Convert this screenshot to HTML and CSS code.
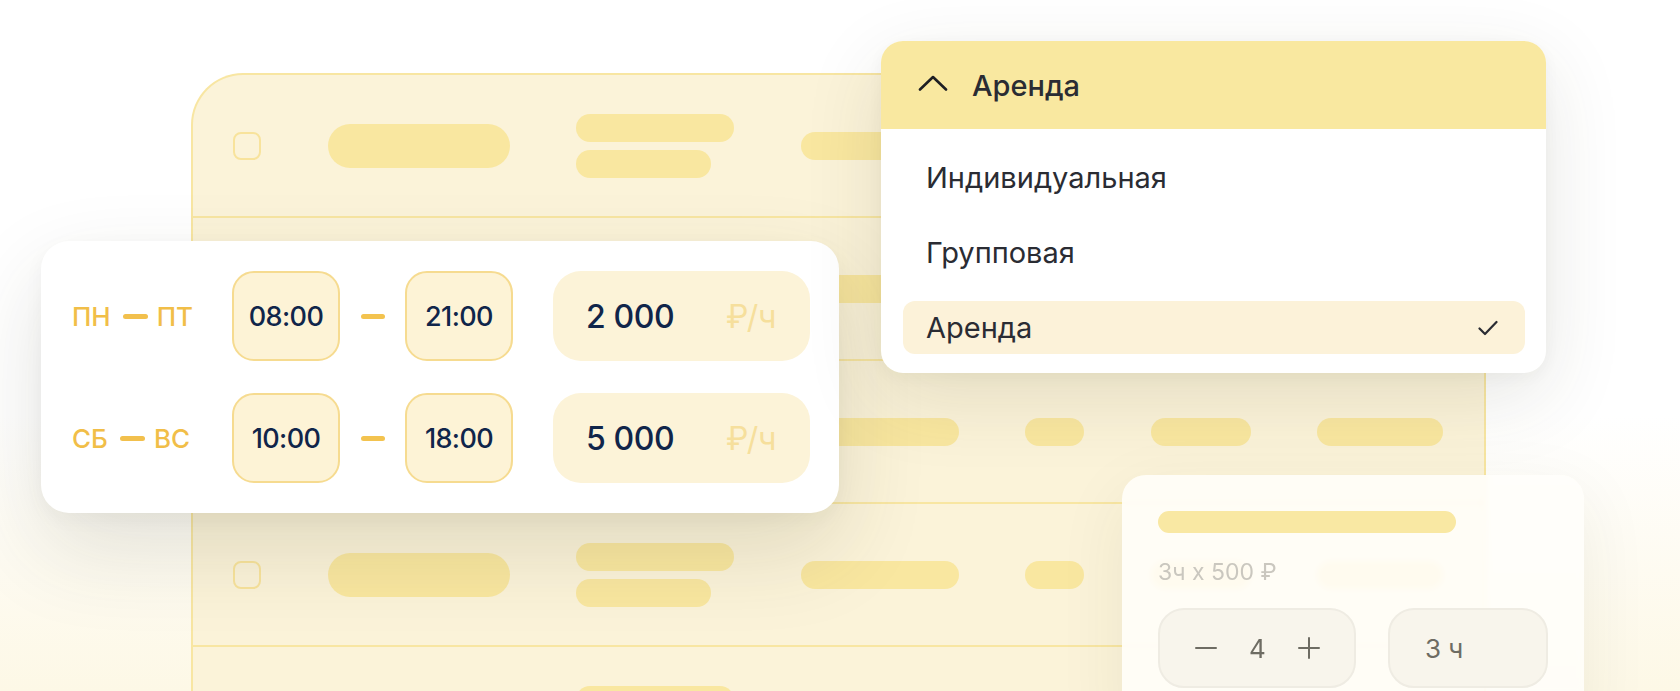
FILE: index.html
```html
<!DOCTYPE html>
<html lang="ru">
<head>
<meta charset="utf-8">
<title>Расписание и аренда</title>
<link rel="stylesheet" href="styles.css">
</head>
<body>
<div class="scene">

  <!-- skeleton table in the background -->
  <div class="table">
    <div class="row">
      <span class="check"></span>
      <span class="pill"></span>
      <span class="stack"><i class="bar bar-a"></i><i class="bar bar-b"></i></span>
      <span class="bar c3"></span>
      <span class="bar c4"></span>
      <span class="bar c5"></span>
      <span class="bar c6"></span>
    </div>
    <div class="row">
      <span class="check"></span>
      <span class="pill"></span>
      <span class="stack"><i class="bar bar-a"></i><i class="bar bar-b"></i></span>
      <span class="bar c3"></span>
      <span class="bar c4"></span>
      <span class="bar c5"></span>
      <span class="bar c6"></span>
    </div>
    <div class="row">
      <span class="check"></span>
      <span class="pill"></span>
      <span class="stack"><i class="bar bar-a"></i><i class="bar bar-b"></i></span>
      <span class="bar c3"></span>
      <span class="bar c4"></span>
      <span class="bar c5"></span>
      <span class="bar c6"></span>
    </div>
    <div class="row">
      <span class="check"></span>
      <span class="pill"></span>
      <span class="stack"><i class="bar bar-a"></i><i class="bar bar-b"></i></span>
      <span class="bar c3"></span>
      <span class="bar c4"></span>
      <span class="bar c5"></span>
      <span class="bar c6"></span>
    </div>
    <div class="row">
      <span class="check"></span>
      <span class="pill"></span>
      <span class="stack"><i class="bar bar-a"></i><i class="bar bar-b"></i></span>
      <span class="bar c3"></span>
      <span class="bar c4"></span>
      <span class="bar c5"></span>
      <span class="bar c6"></span>
    </div>
  </div>

  <!-- working hours and prices -->
  <div class="schedule">
    <div class="sched-row">
      <div class="days">ПН<span class="dash"></span>ПТ</div>
      <div class="time">08:00</div>
      <span class="sep"></span>
      <div class="time">21:00</div>
      <div class="price"><span class="amount">2 000</span><span class="unit">₽/ч</span></div>
    </div>
    <div class="sched-row">
      <div class="days">СБ<span class="dash"></span>ВС</div>
      <div class="time">10:00</div>
      <span class="sep"></span>
      <div class="time">18:00</div>
      <div class="price"><span class="amount">5 000</span><span class="unit">₽/ч</span></div>
    </div>
  </div>

  <!-- booking type select -->
  <div class="dropdown">
    <div class="dd-head">
      <svg class="chev" width="30" height="16" viewBox="0 0 30 16" aria-hidden="true">
        <path d="M2 14.5 L15 2 L28 14.5" fill="none" stroke="#1e1f23" stroke-width="2.6" stroke-linecap="round" stroke-linejoin="round"/>
      </svg>
      <span>Аренда</span>
    </div>
    <ul class="dd-list">
      <li class="dd-item">Индивидуальная</li>
      <li class="dd-item">Групповая</li>
      <li class="dd-item selected">Аренда
        <svg width="20" height="16" viewBox="0 0 20 16" aria-hidden="true">
          <path d="M1.5 8.5 L7 14 L18.5 2" fill="none" stroke="#2a2c33" stroke-width="2.2" stroke-linecap="round" stroke-linejoin="round"/>
        </svg>
      </li>
    </ul>
  </div>

  <!-- booking summary -->
  <div class="booking">
    <div class="b-bar"></div>
    <div class="b-calc">3ч x 500 ₽</div>
    <div class="b-controls">
      <div class="stepper">
        <svg width="22" height="22" viewBox="0 0 22 22" aria-label="меньше">
          <path d="M1 11 H21" stroke="#6e6c63" stroke-width="2" stroke-linecap="round"/>
        </svg>
        <span class="qty">4</span>
        <svg width="22" height="22" viewBox="0 0 22 22" aria-label="больше">
          <path d="M1 11 H21 M11 1 V21" stroke="#6e6c63" stroke-width="2" stroke-linecap="round"/>
        </svg>
      </div>
      <div class="hours">3 ч</div>
    </div>
  </div>

</div>
</body>
</html>
```

FILE: styles.css
```css
* {
  box-sizing: border-box;
}

html, body {
  margin: 0;
  padding: 0;
}

body {
  width: 1680px;
  height: 691px;
  overflow: hidden;
  font-family: Inter, "Noto Sans", "DejaVu Sans", sans-serif;
  background: linear-gradient(to bottom, #ffffff 0%, #ffffff 60%, #fdf8e6 100%);
}

.scene {
  position: relative;
  width: 1680px;
  height: 691px;
  overflow: hidden;
  padding-top: 73px;
  padding-left: 191px;
}

/* ---------- background table ---------- */

.table {
  width: 1295px;
  background: #fbf3d9;
  border: 2px solid #f8e6a2;
  border-bottom: none;
  border-radius: 52px 24px 0 0;
}

.row {
  height: 143px;
  display: flex;
  align-items: center;
  gap: 66.5px;
  padding-left: 40px;
  border-bottom: 2px solid #f8e6a2;
}

.check {
  width: 28px;
  height: 28px;
  flex: none;
  border: 2px solid #f8e39c;
  border-radius: 8px;
}

.pill {
  width: 182px;
  height: 44px;
  flex: none;
  border-radius: 22px;
  background: #f9e7a0;
}

.stack {
  display: flex;
  flex-direction: column;
  gap: 8px;
  width: 158px;
  flex: none;
}

.bar {
  display: block;
  height: 28px;
  flex: none;
  border-radius: 14px;
  background: #f9e7a0;
}

.bar-a { width: 158px; }
.bar-b { width: 135px; }
.c3 { width: 158px; }
.c4 { width: 59px; }
.c5 { width: 100px; }
.c6 { width: 126px; }

/* ---------- schedule card ---------- */

.schedule {
  position: absolute;
  left: 41px;
  top: 241px;
  width: 798px;
  padding: 30px 29px 30px 31px;
  display: flex;
  flex-direction: column;
  gap: 32px;
  background: #ffffff;
  border-radius: 28px;
  box-shadow: 0 36px 90px rgba(60, 55, 35, 0.14), 0 6px 20px rgba(60, 55, 35, 0.04);
}

.sched-row {
  display: flex;
  align-items: center;
  height: 90px;
}

.days {
  width: 160px;
  flex: none;
  display: flex;
  align-items: center;
  font-size: 26px;
  font-weight: 500;
  color: #f1be48;
}

.dash {
  display: inline-block;
  width: 25px;
  height: 5px;
  margin: 0 9px 0 12px;
  border-radius: 3px;
  background: #f2c04d;
}

.time {
  width: 108px;
  height: 90px;
  flex: none;
  display: flex;
  align-items: center;
  justify-content: center;
  border: 2px solid #f6db90;
  border-radius: 22px;
  background: #fdf3d6;
  font-size: 27px;
  font-weight: 500;
  color: #10254a;
  letter-spacing: -0.6px;
}

.sep {
  width: 24px;
  height: 5px;
  flex: none;
  margin: 0 20px 0 21px;
  border-radius: 3px;
  background: #f3c34f;
}

.price {
  margin-left: 40px;
  width: 257px;
  height: 90px;
  flex: none;
  display: flex;
  align-items: center;
  justify-content: space-between;
  padding: 0 34px 0 33px;
  border-radius: 28px;
  background: #fcf3d8;
  font-size: 32px;
  font-weight: 500;
  letter-spacing: -0.4px;
}

.amount {
  color: #10254a;
}

.unit {
  color: #f6df9c;
  font-weight: 400;
}

/* ---------- dropdown ---------- */

.dropdown {
  position: absolute;
  left: 881px;
  top: 41px;
  width: 665px;
  background: #ffffff;
  border-radius: 22px;
  overflow: hidden;
  box-shadow: 0 24px 80px rgba(60, 55, 35, 0.12), 0 4px 16px rgba(60, 55, 35, 0.04);
  color: #2a2c33;
}

.dd-head {
  height: 88px;
  display: flex;
  align-items: center;
  gap: 24px;
  padding-left: 37px;
  background: #f9e8a0;
  font-size: 29px;
  font-weight: 500;
}

.chev {
  flex: none;
  margin-top: -4px;
}

.dd-list {
  list-style: none;
  margin: 0;
  padding: 22px 21px 19px 22px;
  display: flex;
  flex-direction: column;
  gap: 22px;
}

.dd-item {
  height: 53px;
  display: flex;
  align-items: center;
  justify-content: space-between;
  padding: 0 27px 0 23px;
  border-radius: 12px;
  font-size: 29px;
  font-weight: 400;
}

.dd-item.selected {
  background: #fcf2d9;
}

/* ---------- booking card ---------- */

.booking {
  position: absolute;
  left: 1122px;
  top: 475px;
  width: 462px;
  height: 260px;
  padding: 36px 36px 0 36px;
  border-radius: 24px;
  background: rgba(255, 254, 250, 0.87);
  backdrop-filter: blur(3px);
  box-shadow: 0 20px 70px rgba(60, 55, 35, 0.07);
}

.b-bar {
  width: 298px;
  height: 22px;
  border-radius: 11px;
  background: #f9e8a3;
}

.b-calc {
  margin-top: 26px;
  height: 26px;
  line-height: 26px;
  font-size: 23px;
  color: #cac7bf;
}

.b-controls {
  margin-top: 23px;
  display: flex;
  gap: 32px;
}

.stepper,
.hours {
  height: 80px;
  display: flex;
  align-items: center;
  border: 2px solid #efece3;
  border-radius: 26px;
  background: #f8f5ec;
  font-size: 26px;
  color: #6e6c63;
}

.stepper {
  width: 198px;
  justify-content: space-between;
  padding: 0 34px 0 35px;
}

.hours {
  width: 160px;
  padding-left: 35px;
}
```
